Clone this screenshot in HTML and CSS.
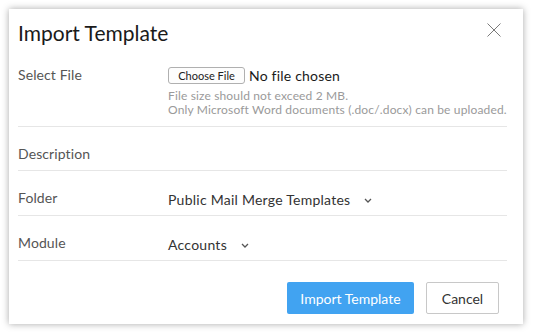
FILE: index.html
```html
<!DOCTYPE html>
<html lang="en">
<head>
    <meta charset="UTF-8">
    <title>Import Template</title>
    <link rel="stylesheet" href="styles.css">
</head>
<body>
    <div class="dialog">
        <div class="dialog-header">
            <h2 class="dialog-title">Import Template</h2>
            <span class="close-btn">
                <svg width="14" height="14" viewBox="0 0 14 14"><path d="M0.5 0.5L13.5 13.5M13.5 0.5L0.5 13.5" stroke="#7a7a7a" stroke-width="1"/></svg>
            </span>
        </div>

        <div class="form-row file-row">
            <div class="row-label">Select File</div>
            <div class="row-value">
                <div class="file-line">
                    <span class="choose-btn">Choose File</span>
                    <span class="file-status">No file chosen</span>
                </div>
                <div class="hint">File size should not exceed 2 MB.</div>
                <div class="hint">Only Microsoft Word documents (.doc/.docx) can be uploaded.</div>
            </div>
        </div>

        <div class="form-row">
            <div class="row-label">Description</div>
        </div>

        <div class="form-row select-row">
            <div class="row-label">Folder</div>
            <div class="row-value select-value">
                Public Mail Merge Templates
                <svg class="chevron" width="8" height="5" viewBox="0 0 8 5"><path d="M1 1L4 4L7 1" fill="none" stroke="#555" stroke-width="1.3"/></svg>
            </div>
        </div>

        <div class="form-row select-row">
            <div class="row-label">Module</div>
            <div class="row-value select-value">
                Accounts
                <svg class="chevron" width="8" height="5" viewBox="0 0 8 5"><path d="M1 1L4 4L7 1" fill="none" stroke="#555" stroke-width="1.3"/></svg>
            </div>
        </div>

        <div class="dialog-footer">
            <button class="primary-btn">Import Template</button>
            <button class="cancel-btn">Cancel</button>
        </div>
    </div>
</body>
</html>
```

FILE: styles.css
```css
body {
    margin: 0;
    padding: 9px;
    background-color: #ffffff;
    font-family: Lato, "Open Sans", Arial, sans-serif;
}
.dialog {
    width: 514px;
    height: 315px;
    box-sizing: border-box;
    background-color: white;
    box-shadow: 0 0 7px rgba(0,0,0,0.35);
    padding: 0 16px 0 9px;
}
.dialog-header {
    display: flex;
    justify-content: space-between;
    align-items: center;
    height: 38px;
    box-sizing: border-box;
}
.dialog-title {
    margin: 0;
    padding-top: 10px;
    font-size: 21px;
    font-weight: normal;
    line-height: 26px;
    color: #1a1a1a;
}
.close-btn {
    display: flex;
    margin-right: 6px;
    margin-top: 4px;
}
.form-row {
    display: flex;
    align-items: flex-start;
    border-bottom: 1px solid #e6e6e6;
    padding: 18px 0 8px 0;
}
.row-label {
    width: 150px;
    flex-shrink: 0;
    font-size: 14px;
    line-height: 17px;
    letter-spacing: 0.1px;
    color: #555555;
}
.file-row {
    padding-top: 19px;
    padding-bottom: 9px;
}
.file-line {
    display: flex;
    align-items: center;
    height: 17px;
    margin-top: 1px;
}
.choose-btn {
    display: inline-block;
    box-sizing: border-box;
    width: 77px;
    height: 17px;
    line-height: 15px;
    border: 1px solid #b0b0b0;
    border-radius: 3px;
    font-size: 11px;
    text-align: center;
    color: #222;
    background: #fdfdfd;
}
.file-status {
    margin-left: 4px;
    font-size: 14px;
    letter-spacing: 0.2px;
    color: #1a1a1a;
}
.hint {
    font-size: 12px;
    line-height: 14px;
    letter-spacing: 0.15px;
    color: #9a9a9a;
}
.file-line + .hint {
    margin-top: 5px;
}
.select-row {
    padding-bottom: 7px;
}
.select-value {
    display: flex;
    align-items: center;
    padding-top: 2px;
    font-size: 14px;
    line-height: 17px;
    letter-spacing: 0.25px;
    color: #333333;
}
.chevron {
    margin-left: 14px;
    margin-top: 1px;
}
.dialog-footer {
    display: flex;
    justify-content: flex-end;
    gap: 12px;
    padding-top: 21px;
    margin-right: 8px;
}
.primary-btn,
.cancel-btn {
    height: 32px;
    font-family: inherit;
    font-size: 14px;
    border-radius: 2px;
    cursor: pointer;
}
.primary-btn {
    width: 127px;
    background-color: #41a3f1;
    color: white;
    border: none;
}
.cancel-btn {
    width: 73px;
    background-color: white;
    color: #333;
    border: 1px solid #c8c8c8;
}
```
